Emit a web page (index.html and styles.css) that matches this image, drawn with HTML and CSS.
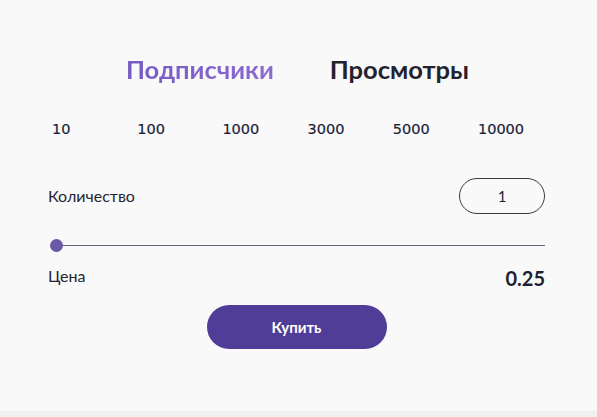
FILE: index.html
```html
<!DOCTYPE html>
<html lang="ru">
<head>
<meta charset="utf-8">
<link rel="stylesheet" href="styles.css">
</head>
<body>
<div class="card">
  <div class="tabs">
    <span class="tab tab-active">Подписчики</span>
    <span class="tab">Просмотры</span>
  </div>
  <div class="amounts">
    <span>10</span><span>100</span><span>1000</span><span>3000</span><span>5000</span><span>10000</span>
  </div>
  <div class="row qty-row">
    <span class="label">Количество</span>
    <div class="qty-input">1</div>
  </div>
  <div class="slider">
    <div class="thumb"></div>
  </div>
  <div class="row price-row">
    <span class="label">Цена</span>
    <span class="price">0.25</span>
  </div>
  <div class="actions">
    <button class="buy">Купить</button>
  </div>
</div>
</body>
</html>
```

FILE: styles.css
```css
html, body {
  margin: 0;
  padding: 0;
}
body {
  background: #efefef;
  font-family: Lato, "Noto Sans", sans-serif;
  color: #222433;
}
.card {
  background: #f9f9f9;
  height: 411px;
  box-sizing: border-box;
  padding: 53px 52px 0 48px;
  display: flex;
  flex-direction: column;
}
.tabs {
  display: flex;
  justify-content: center;
  gap: 56px;
  padding-left: 2px;
}
.tab {
  font-size: 25.5px;
  font-weight: 700;
  line-height: 32px;
  color: #23232f;
}
.tab-active {
  background: linear-gradient(90deg, #745bc4, #8c6bd2);
  -webkit-background-clip: text;
  background-clip: text;
  color: transparent;
}
.amounts {
  margin-top: 35px;
  display: grid;
  grid-template-columns: repeat(6, 85.2px);
  padding-left: 4px;
  font-family: "DejaVu Sans", Verdana, sans-serif;
  font-size: 14.5px;
  font-weight: 400;
  line-height: 18px;
  color: #1d1f3a;
  -webkit-text-stroke: 0.2px #1d1f3a;
}
.row {
  display: flex;
  justify-content: space-between;
  align-items: center;
}
.qty-row {
  margin-top: 40px;
}
.label {
  font-size: 16px;
  line-height: 18px;
  color: #262633;
}
.qty-input {
  width: 84px;
  height: 34px;
  border: 1px solid #3a3a44;
  border-radius: 18px;
  display: flex;
  align-items: center;
  justify-content: center;
  font-size: 15px;
  color: #1d1f3a;
}
.slider {
  position: relative;
  margin: 31px 0 0 8px;
  height: 1px;
  background: #6b6580;
}
.thumb {
  position: absolute;
  left: -6px;
  top: -6px;
  width: 13px;
  height: 13px;
  border-radius: 50%;
  background: #6b59a6;
}
.price-row {
  margin-top: 21px;
  align-items: flex-start;
}
.price {
  font-size: 20px;
  line-height: 23px;
  font-weight: 700;
  color: #1d1f33;
}
.actions {
  display: flex;
  justify-content: center;
  margin-top: 15px;
}
.buy {
  width: 180px;
  height: 44px;
  border: none;
  border-radius: 22px;
  background: #4f3d98;
  color: #ffffff;
  font-family: Lato, "Noto Sans", sans-serif;
  font-size: 15px;
  font-weight: 700;
}
```
